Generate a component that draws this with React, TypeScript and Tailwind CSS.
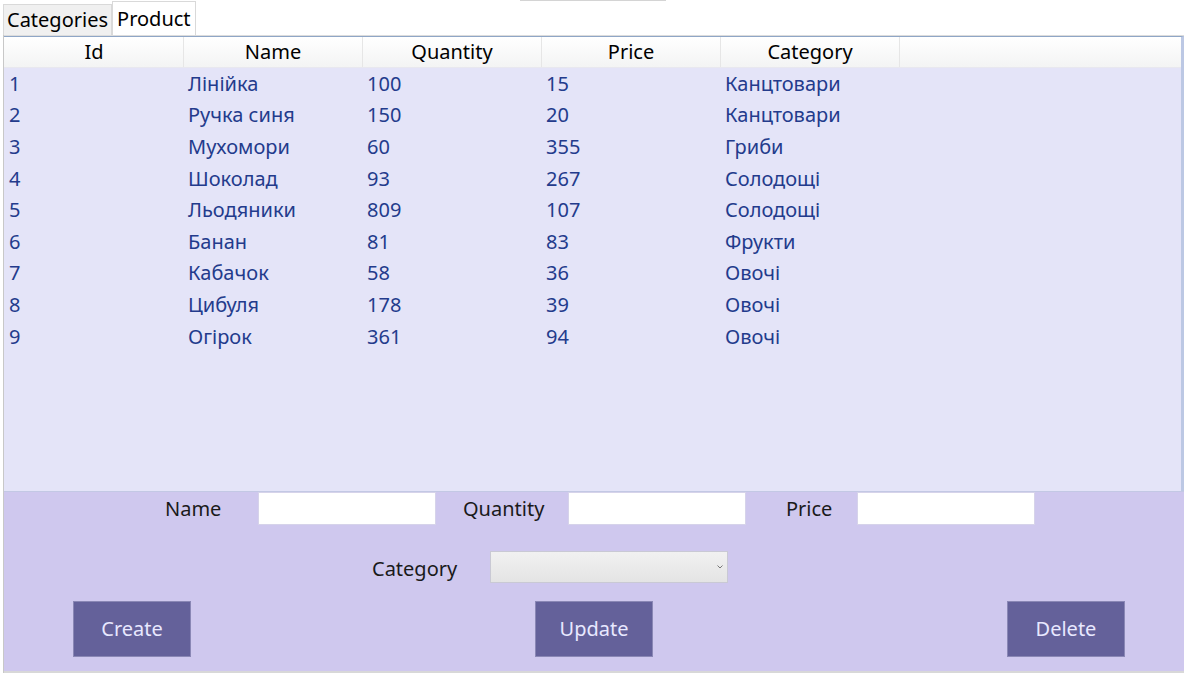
import React from "react";

const rows = [
  ["1", "Лінійка", "100", "15", "Канцтовари"],
  ["2", "Ручка синя", "150", "20", "Канцтовари"],
  ["3", "Мухомори", "60", "355", "Гриби"],
  ["4", "Шоколад", "93", "267", "Солодощі"],
  ["5", "Льодяники", "809", "107", "Солодощі"],
  ["6", "Банан", "81", "83", "Фрукти"],
  ["7", "Кабачок", "58", "36", "Овочі"],
  ["8", "Цибуля", "178", "39", "Овочі"],
  ["9", "Огірок", "361", "94", "Овочі"],
];

const headers = ["Id", "Name", "Quantity", "Price", "Category"];

export default function App() {
  return (
    <div
      className="relative w-[1184px] h-[675px] bg-white overflow-hidden text-[20px]"
      style={{ fontFamily: '"Noto Sans", "Open Sans", sans-serif' }}
    >
      <div className="absolute top-0 left-[520px] w-[146px] h-[1px] bg-[#d4d4d4]" />
      {/* tabs */}
      <div className="flex items-end h-[35px] pl-[3px]">
        <div className="h-[31px] px-[3px] flex items-center bg-[#f0f0f0] border border-b-0 border-[#d9d9d9] text-black leading-none">
          Categories
        </div>
        <div className="h-[34px] px-[4px] flex items-center bg-white border border-b-0 border-[#d9d9d9] text-black leading-none">
          Product
        </div>
      </div>
      {/* main */}
      <div className="ml-[3px] border-l border-[#c8c8c8] h-[638px] flex flex-col">
        <div className="border-t border-[#dcdcdc]">
          <div className="border-t border-[#8fa6c6] border-r-[3px] border-r-[#bcc8e4] h-[455px] flex flex-col bg-[#e4e4f8]">
            <div className="flex h-[31px] pl-[1px] bg-gradient-to-b from-white to-[#f3f4f4] border-b border-[#e8e8ef]">
              {headers.map((h) => (
                <div
                  key={h}
                  className="w-[179px] border-r border-[#e6e6e6] flex items-center justify-center text-black leading-none"
                >
                  {h}
                </div>
              ))}
              <div className="flex-1" />
            </div>
            <div className="flex-1 pl-[1px]">
              {rows.map((r) => (
                <div key={r[0]} className="flex h-[31.6px] items-center text-[#233b8c] leading-none">
                  {r.map((c, i) => (
                    <div key={i} className="w-[179px] pl-[4px]">
                      {c}
                    </div>
                  ))}
                </div>
              ))}
            </div>
          </div>
        </div>
        {/* form */}
        <div className="h-[183px] bg-[#cfc8ee] border-t border-[#c3c8e4] flex flex-col text-[#1a1a1a]">
          <div className="flex items-center h-[33px] pl-[161px]">
            <div className="w-[93px]">Name</div>
            <div className="w-[178px] h-[33px] bg-white border border-[#d6d3ea]" />
            <div className="w-[132px] pl-[27px]">Quantity</div>
            <div className="w-[178px] h-[33px] bg-white border border-[#d6d3ea]" />
            <div className="w-[111px] pl-[40px]">Price</div>
            <div className="w-[178px] h-[33px] bg-white border border-[#d6d3ea]" />
          </div>
          <div className="flex items-center h-[32px] mt-[26px] pl-[368px]">
            <div className="w-[118px] pt-[3px]">Category</div>
            <div className="relative w-[238px] h-[32px] bg-gradient-to-b from-[#f1f1f1] to-[#e4e4e4] border border-[#c9c9d4]">
              <svg
                className="absolute right-[4px] top-[13px]"
                width="6"
                height="4"
                viewBox="0 0 6 4"
              >
                <path d="M0.5 0.5 L3 3 L5.5 0.5" stroke="#777" strokeWidth="1" fill="none" />
              </svg>
            </div>
          </div>
          <div className="flex items-center h-[55px] mt-[18px] pl-[69px]">
            <button className="w-[118px] h-[56px] bg-[#64619a] border border-[#8a87b5] text-[#e8e8ff]">
              Create
            </button>
            <button className="ml-[344px] w-[118px] h-[56px] bg-[#64619a] border border-[#8a87b5] text-[#e8e8ff]">
              Update
            </button>
            <button className="ml-[354px] w-[118px] h-[56px] bg-[#64619a] border border-[#8a87b5] text-[#e8e8ff]">
              Delete
            </button>
          </div>
        </div>
        <div className="h-[2px] bg-[#d8d8d8]" />
      </div>
    </div>
  );
}
